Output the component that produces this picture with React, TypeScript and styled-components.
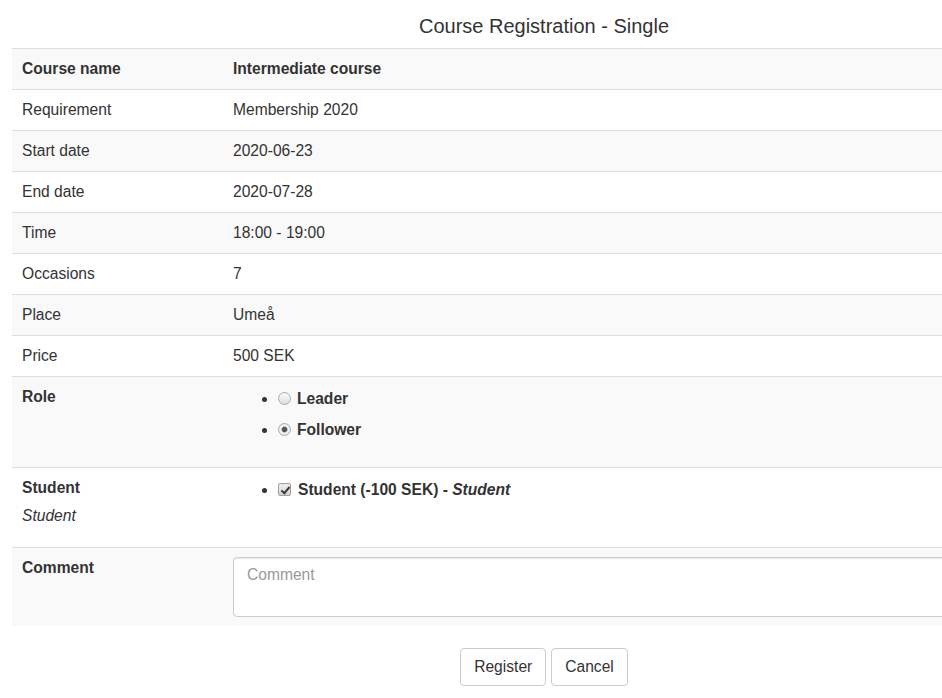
import React from "react"
import styled, { createGlobalStyle } from "styled-components"

const GlobalStyle = createGlobalStyle`
  html, body {
    margin: 0;
    overflow: hidden;
  }
  body {
    font-family: "Liberation Sans", Arial, Helvetica, sans-serif;
    font-size: 15.6px;
    line-height: 22px;
    color: #333;
    background: #fff;
  }
`

const Page = styled.div`
  width: 1064px;
  margin-left: 12px;
  padding-top: 15px;
`

const Title = styled.h1`
  margin: 0 0 11px;
  font-size: 20px;
  line-height: 22px;
  font-weight: normal;
  text-align: center;
  color: #333;
`

const Table = styled.table`
  width: 100%;
  border-collapse: collapse;
  border-spacing: 0;
`

const Row = styled.tr<{ $striped?: boolean }>`
  background-color: ${(p) => (p.$striped ? "#f9f9f9" : "#fff")};
`

const Cell = styled.td<{ $bold?: boolean }>`
  padding: 9px 9px;
  border-top: 1px solid #ddd;
  vertical-align: top;
  text-align: left;
  line-height: 22px;
  font-weight: ${(p) => (p.$bold ? "bold" : "normal")};
`

const LabelCell = styled(Cell)`
  width: 212px;
  box-sizing: border-box;
  padding-left: 10px;
`

const SubLabel = styled.div`
  margin: 6px 0 11px;
  font-style: italic;
  font-weight: normal;
`

const OptionList = styled.ul<{ $top?: number; $bottom?: number }>`
  margin: ${(p) => p.$top ?? 0}px 0 ${(p) => p.$bottom ?? 0}px;
  padding-left: 45px;
`

const OptionItem = styled.li`
  margin-bottom: 9px;
  &:last-child {
    margin-bottom: 0;
  }
`

const OptionLabel = styled.label`
  font-weight: bold;
  cursor: pointer;
`

const Radio = styled.input.attrs({ type: "radio" })`
  appearance: none;
  -webkit-appearance: none;
  box-sizing: border-box;
  width: 13px;
  height: 13px;
  margin: 0 6px 0 0;
  border: 1px solid #aaa;
  border-radius: 50%;
  background: linear-gradient(#fbfbfb, #dedede);
  vertical-align: -1px;

  &:checked {
    background: radial-gradient(circle, #555 0, #555 2.2px, #b8b8b8 2.9px, #f2f2f2 3.6px, #e6e6e6 100%);
  }
`

const Checkbox = styled.input.attrs({ type: "checkbox" })`
  appearance: none;
  -webkit-appearance: none;
  position: relative;
  box-sizing: border-box;
  width: 13px;
  height: 13px;
  margin: 0 7px 0 0;
  border: 1px solid #a0a0a0;
  border-radius: 2px;
  background: linear-gradient(#efefef, #d4d4d4);
  vertical-align: -1px;

  &:checked::after {
    content: "";
    position: absolute;
    left: 3.5px;
    top: 0.5px;
    width: 3px;
    height: 7px;
    border: solid #3a3a3a;
    border-width: 0 2px 2px 0;
    transform: rotate(40deg);
  }
`

const Comment = styled.textarea`
  display: block;
  box-sizing: border-box;
  width: 100%;
  height: 60px;
  margin: 0;
  padding: 6px 13px;
  font: inherit;
  line-height: 22px;
  color: #555;
  background: #fff;
  border: 1px solid #ccc;
  border-radius: 4px;
  box-shadow: inset 0 1px 1px rgba(0, 0, 0, 0.075);
  resize: none;
  outline: none;

  &::placeholder {
    color: #999;
  }
`

const ButtonRow = styled.div`
  display: flex;
  justify-content: center;
  gap: 5px;
  margin-top: 22px;
`

const Button = styled.button`
  font: inherit;
  line-height: 22px;
  padding: 7px 13px;
  color: #333;
  background: #fff;
  border: 1px solid #ccc;
  border-radius: 4px;
  cursor: pointer;
`

const details: [string, string][] = [
  ["Requirement", "Membership 2020"],
  ["Start date", "2020-06-23"],
  ["End date", "2020-07-28"],
  ["Time", "18:00 - 19:00"],
  ["Occasions", "7"],
  ["Place", "Umeå"],
  ["Price", "500 SEK"],
]

function App() {
  return (
    <>
      <GlobalStyle />
      <Page>
        <Title>Course Registration - Single</Title>
        <Table>
          <tbody>
            <Row $striped>
              <LabelCell $bold>Course name</LabelCell>
              <Cell $bold>Intermediate course</Cell>
            </Row>
            {details.map(([label, value], i) => (
              <Row key={label} $striped={i % 2 === 1}>
                <LabelCell>{label}</LabelCell>
                <Cell>{value}</Cell>
              </Row>
            ))}
            <Row $striped>
              <LabelCell $bold>Role</LabelCell>
              <Cell>
                <OptionList $top={2} $bottom={17}>
                  <OptionItem>
                    <OptionLabel>
                      <Radio name="role" value="leader" />
                      Leader
                    </OptionLabel>
                  </OptionItem>
                  <OptionItem>
                    <OptionLabel>
                      <Radio name="role" value="follower" defaultChecked />
                      Follower
                    </OptionLabel>
                  </OptionItem>
                </OptionList>
              </Cell>
            </Row>
            <Row>
              <LabelCell $bold>
                Student
                <SubLabel>Student</SubLabel>
              </LabelCell>
              <Cell>
                <OptionList $top={2}>
                  <OptionItem>
                    <OptionLabel>
                      <Checkbox defaultChecked />
                      Student (-100 SEK) - <i>Student</i>
                    </OptionLabel>
                  </OptionItem>
                </OptionList>
              </Cell>
            </Row>
            <Row $striped>
              <LabelCell $bold>Comment</LabelCell>
              <Cell>
                <Comment placeholder="Comment" />
              </Cell>
            </Row>
          </tbody>
        </Table>
        <ButtonRow>
          <Button type="button">Register</Button>
          <Button type="button">Cancel</Button>
        </ButtonRow>
      </Page>
    </>
  )
}

export default App
